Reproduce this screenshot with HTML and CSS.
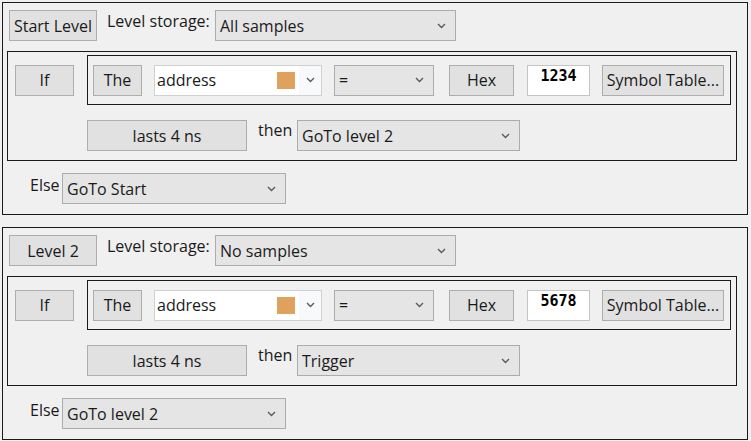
FILE: index.html
```html
<!DOCTYPE html>
<html lang="en">
<head>
  <meta charset="UTF-8" />
  <title>Trigger levels</title>
  <link rel="stylesheet" href="styles.css">
</head>
<body>

  <!-- level 1 -->
  <div class="level">
    <div class="level-head">
      <button class="btn btn-level">Start Level</button>
      <span class="label label-storage">Level storage:</span>
      <div class="combo combo-storage"><span>All samples</span><svg class="chev" width="9" height="6" viewBox="0 0 9 6"><polyline points="1,1 4.5,4.5 8,1" /></svg></div>
    </div>
    <div class="if-box">
      <div class="if-row">
        <button class="btn btn-if">If</button>
        <div class="cond-box">
          <button class="btn btn-the">The</button>
          <div class="edit-combo">
            <span class="edit-text">address</span>
            <span class="swatch"></span>
            <span class="edit-drop"><svg class="chev" width="9" height="6" viewBox="0 0 9 6"><polyline points="1,1 4.5,4.5 8,1" /></svg></span>
          </div>
          <div class="combo combo-op"><span>=</span><svg class="chev" width="9" height="6" viewBox="0 0 9 6"><polyline points="1,1 4.5,4.5 8,1" /></svg></div>
          <button class="btn btn-hex">Hex</button>
          <div class="value">1234</div>
          <button class="btn btn-symbol">Symbol Table...</button>
        </div>
      </div>
      <div class="then-row">
        <button class="btn btn-lasts">lasts 4 ns</button>
        <span class="label label-then">then</span>
        <div class="combo combo-action"><span>GoTo level 2</span><svg class="chev" width="9" height="6" viewBox="0 0 9 6"><polyline points="1,1 4.5,4.5 8,1" /></svg></div>
      </div>
    </div>
    <div class="else-row">
      <span class="label label-else">Else</span>
      <div class="combo combo-else"><span>GoTo Start</span><svg class="chev" width="9" height="6" viewBox="0 0 9 6"><polyline points="1,1 4.5,4.5 8,1" /></svg></div>
    </div>
  </div>

  <!-- level 2 -->
  <div class="level">
    <div class="level-head">
      <button class="btn btn-level">Level 2</button>
      <span class="label label-storage">Level storage:</span>
      <div class="combo combo-storage"><span>No samples</span><svg class="chev" width="9" height="6" viewBox="0 0 9 6"><polyline points="1,1 4.5,4.5 8,1" /></svg></div>
    </div>
    <div class="if-box">
      <div class="if-row">
        <button class="btn btn-if">If</button>
        <div class="cond-box">
          <button class="btn btn-the">The</button>
          <div class="edit-combo">
            <span class="edit-text">address</span>
            <span class="swatch"></span>
            <span class="edit-drop"><svg class="chev" width="9" height="6" viewBox="0 0 9 6"><polyline points="1,1 4.5,4.5 8,1" /></svg></span>
          </div>
          <div class="combo combo-op"><span>=</span><svg class="chev" width="9" height="6" viewBox="0 0 9 6"><polyline points="1,1 4.5,4.5 8,1" /></svg></div>
          <button class="btn btn-hex">Hex</button>
          <div class="value">5678</div>
          <button class="btn btn-symbol">Symbol Table...</button>
        </div>
      </div>
      <div class="then-row">
        <button class="btn btn-lasts">lasts 4 ns</button>
        <span class="label label-then">then</span>
        <div class="combo combo-action"><span>Trigger</span><svg class="chev" width="9" height="6" viewBox="0 0 9 6"><polyline points="1,1 4.5,4.5 8,1" /></svg></div>
      </div>
    </div>
    <div class="else-row">
      <span class="label label-else">Else</span>
      <div class="combo combo-else"><span>GoTo level 2</span><svg class="chev" width="9" height="6" viewBox="0 0 9 6"><polyline points="1,1 4.5,4.5 8,1" /></svg></div>
    </div>
  </div>

</body>
</html>
```

FILE: styles.css
```css
* {
  box-sizing: border-box;
}
body {
  margin: 0;
  padding: 2px 0 0 2px;
  background-color: #f0f0f0;
  font-family: 'Open Sans', 'Noto Sans', sans-serif;
  font-size: 16px;
  color: #1a1a1a;
}
.level {
  width: 746px;
  height: 213px;
  margin-bottom: 12px;
  border: 1px solid #1a1a1a;
}
.level-head {
  display: flex;
  align-items: flex-start;
  margin: 7px 0 0 6px;
  height: 31px;
}
.btn {
  height: 31px;
  padding: 0;
  background-color: #e1e1e1;
  border: 1px solid #adadad;
  font-family: inherit;
  font-size: 16px;
  color: #1a1a1a;
  text-align: center;
}
.label {
  line-height: 22px;
  white-space: nowrap;
}
.combo {
  display: flex;
  align-items: center;
  justify-content: space-between;
  height: 31px;
  padding: 0 9px 0 4px;
  background-color: #e5e5e5;
  border: 1px solid #acacac;
}
.chev polyline {
  fill: none;
  stroke: #5a5a5a;
  stroke-width: 1.4;
}
.btn-level {
  width: 88px;
}
.label-storage {
  width: 118px;
  padding-left: 10px;
}
.combo-storage {
  width: 241px;
}
.if-box {
  width: 730px;
  height: 110px;
  margin: 10px 0 0 4px;
  border: 1px solid #1a1a1a;
}
.if-row {
  display: flex;
  align-items: center;
  padding: 3px 0 0 7px;
}
.btn-if {
  width: 59px;
  margin-right: 13px;
}
.cond-box {
  display: flex;
  align-items: center;
  width: 644px;
  height: 50px;
  padding-left: 5px;
  border: 1px solid #1a1a1a;
}
.btn-the {
  width: 49px;
  margin-right: 12px;
}
.edit-combo {
  display: flex;
  align-items: center;
  width: 168px;
  height: 31px;
  margin-right: 12px;
  background-color: #fff;
  border: 1px solid #d0d0d0;
}
.edit-text {
  flex: 1;
  padding-left: 2px;
}
.swatch {
  width: 18px;
  height: 17px;
  margin-right: 4px;
  background-color: #dea25c;
}
.edit-drop {
  display: flex;
  align-items: center;
  justify-content: center;
  width: 22px;
  height: 100%;
  background-color: #f7f9fb;
}
.combo-op {
  width: 100px;
  margin-right: 15px;
}
.btn-hex {
  width: 65px;
  margin-right: 13px;
}
.value {
  width: 63px;
  height: 31px;
  margin-right: 12px;
  padding-top: 1px;
  background-color: #fff;
  border: 1px solid #c4c4c4;
  font-family: 'DejaVu Sans Mono', monospace;
  font-weight: bold;
  font-size: 15px;
  text-align: center;
  color: #000;
}
.btn-symbol {
  width: 122px;
  white-space: nowrap;
}
.then-row {
  display: flex;
  align-items: flex-start;
  margin-top: 15px;
  padding-left: 79px;
}
.btn-lasts {
  width: 160px;
}
.label-then {
  width: 50px;
  padding-left: 11px;
  margin-top: -1px;
}
.combo-action {
  width: 223px;
}
.else-row {
  display: flex;
  align-items: flex-start;
  margin: 12px 0 0 27px;
}
.label-else {
  width: 32px;
  margin-top: 1px;
}
.combo-else {
  width: 224px;
}
```
